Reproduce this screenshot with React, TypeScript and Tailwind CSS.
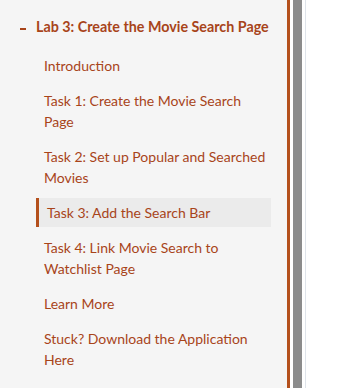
const ITEMS = [
  { title: "Introduction" },
  { title: "Task 1: Create the Movie Search Page" },
  { title: "Task 2: Set up Popular and Searched Movies" },
  { title: "Task 3: Add the Search Bar", active: true },
  { title: "Task 4: Link Movie Search to Watchlist Page" },
  { title: "Learn More" },
  { title: "Stuck? Download the Application Here" },
];

export default function App() {
  return (
    <div className="flex h-screen w-full bg-white font-['Lato',sans-serif]">
      {/* Sidebar */}
      <nav className="h-full w-[290px] shrink-0 border-r-[3px] border-[#b4501c] bg-[#f5f5f5] pt-[16px]">
        <div className="flex items-center pl-[20px] text-[14.3px] font-bold leading-[21px] text-[#a8441a]">
          <span className="mt-[5px] mr-[10px] h-[2px] w-[6px] bg-[#a8441a]" />
          <span className="whitespace-nowrap">Lab 3: Create the Movie Search Page</span>
        </div>

        <ul className="mt-[14px] flex flex-col gap-[6px] pl-[36px] pr-[16px]">
          {ITEMS.map((item) => (
            <li
              key={item.title}
              className={
                item.active
                  ? "border-l-[3px] border-[#b4501c] bg-[#ebebeb] py-[4px] pl-[8px] pr-[3px] text-[14px] leading-[21px] text-[#a8441a]"
                  : "py-[4px] pl-[8px] pr-[3px] text-[14px] leading-[21px] text-[#a8441a]"
              }
            >
              {item.title}
            </li>
          ))}
        </ul>
      </nav>

      {/* Scrollbar area */}
      <div className="w-[3px] shrink-0 bg-white" />
      <div className="w-[9px] shrink-0 bg-[#8c8c8c]" />
      <div className="w-[3px] shrink-0 bg-white" />
      <div className="w-px shrink-0 bg-[#dfe4ea]" />
      <div className="flex-1 bg-white" />
    </div>
  );
}
